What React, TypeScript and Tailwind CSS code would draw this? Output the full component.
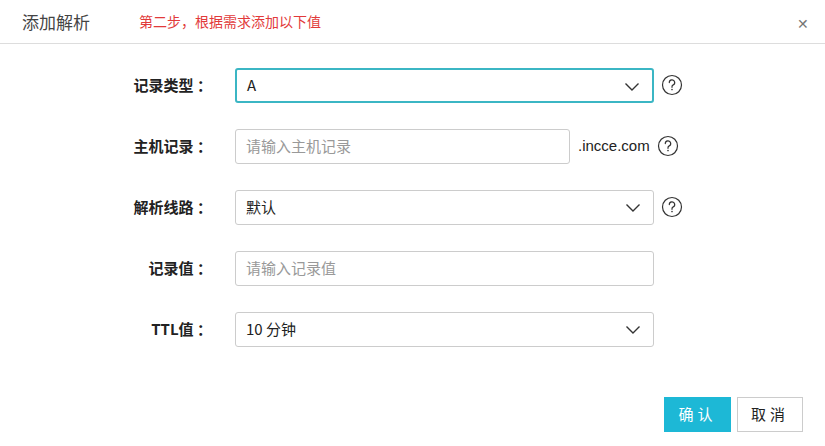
import React from "react";

const Chev = () => (
  <svg width="16" height="10" viewBox="0 0 16 10" className="absolute right-[12px] top-[12px]">
    <path d="M1.5 1.5 L8 8 L14.5 1.5" fill="none" stroke="#333" strokeWidth="1.4" />
  </svg>
);
const Help = () => (
  <svg width="22" height="22" viewBox="0 0 22 22" className="ml-[7px] shrink-0">
    <circle cx="11" cy="11" r="9.5" fill="none" stroke="#333" strokeWidth="1.2" />
    <path d="M8.3 8.6 a2.7 2.7 0 1 1 3.6 2.5 c-0.7 0.3 -0.9 0.8 -0.9 1.6 v0.6" fill="none" stroke="#333" strokeWidth="1.2" strokeLinecap="round" />
    <circle cx="11" cy="15.6" r="0.8" fill="#333" />
  </svg>
);

function Row({ label, children }: { label: string; children: React.ReactNode }) {
  return (
    <div className="flex items-center h-[34px]">
      <div className="w-[212px] text-right text-[15px] font-bold text-[#222]">{label}</div>
      <div className="w-[23px]" />
      {children}
    </div>
  );
}

const base = "relative h-[35px] border rounded-[3px] flex items-center px-[10px] text-[15px] bg-white";

export default function App() {
  return (
    <div className="w-[825px] h-[446px] bg-white relative" style={{ fontFamily: '"Noto Sans CJK SC", "Liberation Sans", sans-serif' }}>
      <div className="h-[44px] border-b border-[#ddd] flex items-center pl-[22px]">
        <span className="text-[17px] text-[#444]">添加解析</span>
        <span className="ml-[49px] text-[14px] text-[#e23a3a]">第二步，根据需求添加以下值</span>
        <span className="absolute right-[16px] top-[13px] text-[14px] text-[#777]">✕</span>
      </div>
      <div className="flex flex-col gap-[27px] pt-[24px]">
        <Row label="记录类型 ：">
          <div className={base + " w-[419px] border-[2px] border-[#3bb6c4]"}><span className="text-[#222]">A</span><Chev /></div>
          <Help />
        </Row>
        <Row label="主机记录 ：">
          <div className={base + " w-[335px] border-[#ccc]"}><span className="text-[#999]">请输入主机记录</span></div>
          <span className="ml-[8px] text-[15px] text-[#222]" style={{ fontFamily: '"Liberation Sans", sans-serif' }}>.incce.com</span>
          <Help />
        </Row>
        <Row label="解析线路 ：">
          <div className={base + " w-[419px] border-[#ccc]"}><span className="text-[#222]">默认</span><Chev /></div>
          <Help />
        </Row>
        <Row label="记录值 ：">
          <div className={base + " w-[419px] border-[#ccc]"}><span className="text-[#999]">请输入记录值</span></div>
        </Row>
        <Row label="TTL值 ：">
          <div className={base + " w-[419px] border-[#ccc]"}><span className="text-[#222]">10 分钟</span><Chev /></div>
        </Row>
      </div>
      <div className="absolute right-[22px] top-[397px] flex gap-[6px]">
        <div className="w-[67px] h-[35px] bg-[#1db8d6] text-white text-[15px] flex items-center justify-center tracking-[4px]">确认</div>
        <div className="w-[66px] h-[35px] border border-[#ccc] text-[#222] text-[15px] flex items-center justify-center tracking-[4px]">取消</div>
      </div>
    </div>
  );
}
